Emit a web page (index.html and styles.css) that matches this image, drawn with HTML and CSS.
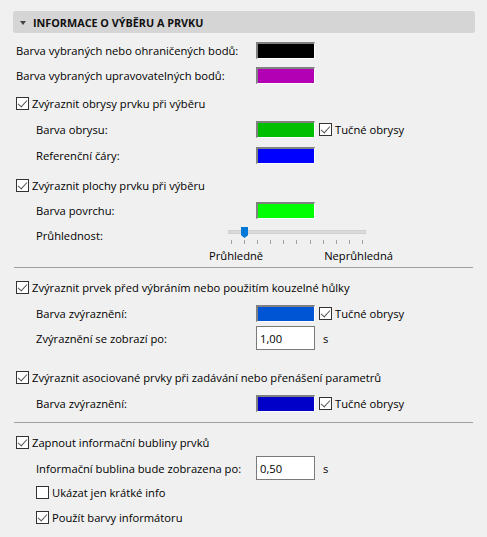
FILE: index.html
```html
<!DOCTYPE html>
<html lang="cs">
<head>
<meta charset="utf-8">
<link rel="stylesheet" href="styles.css">
</head>
<body>
<div class="panel">
  <div class="header"><span class="tri"></span><span class="title">INFORMACE O VÝBĚRU A PRVKU</span></div>

  <div class="row r1"><span class="label">Barva vybraných nebo ohraničených bodů:</span><span class="swatch black"></span></div>
  <div class="row r2"><span class="label">Barva vybraných upravovatelných bodů:</span><span class="swatch magenta"></span></div>

  <div class="row cbrow g4"><span class="cb on"></span><span>Zvýraznit obrysy prvku při výběru</span></div>
  <div class="row sub g2"><span class="label">Barva obrysu:</span><span class="swatch green"></span><span class="cb on small-gap"></span><span>Tučné obrysy</span></div>
  <div class="row sub g2"><span class="label">Referenční čáry:</span><span class="swatch blue"></span></div>

  <div class="row cbrow g6"><span class="cb on"></span><span>Zvýraznit plochy prvku při výběru</span></div>
  <div class="row sub g1"><span class="label">Barva povrchu:</span><span class="swatch lime"></span></div>
  <div class="row sub g1 sliderrow">
    <span class="label short">Průhlednost:</span>
    <div class="slider">
      <div class="track"></div>
      <div class="thumb"></div>
      <div class="ticks"><i></i><i></i><i></i><i></i><i></i><i></i><i></i><i></i><i></i><i></i><i></i></div>
    </div>
  </div>
  <div class="slabels"><span>Průhledně</span><span>Neprůhledná</span></div>

  <hr class="divider d1">

  <div class="row cbrow"><span class="cb on"></span><span>Zvýraznit prvek před výbráním nebo použitím kouzelné hůlky</span></div>
  <div class="row sub g2"><span class="label">Barva zvýraznění:</span><span class="swatch mid"></span><span class="cb on small-gap"></span><span>Tučné obrysy</span></div>
  <div class="row sub g1"><span class="label">Zvýraznění se zobrazí po:</span><span class="input">1,00</span><span class="unit">s</span></div>

  <div class="row cbrow g15"><span class="cb on"></span><span>Zvýraznit asociované prvky při zadávání nebo přenášení parametrů</span></div>
  <div class="row sub g2"><span class="label">Barva zvýraznění:</span><span class="swatch dark"></span><span class="cb on small-gap"></span><span>Tučné obrysy</span></div>

  <hr class="divider d2">

  <div class="row cbrow"><span class="cb on"></span><span>Zapnout informační bubliny prvků</span></div>
  <div class="row sub g2"><span class="label">Informační bublina bude zobrazena po:</span><span class="input">0,50</span><span class="unit">s</span></div>
  <div class="row sub"><span class="cb"></span><span>Ukázat jen krátké info</span></div>
  <div class="row sub g1"><span class="cb on"></span><span>Použít barvy informátoru</span></div>
</div>
</body>
</html>
```

FILE: styles.css
```css
* { box-sizing: border-box; }
html, body { margin: 0; padding: 0; }
body {
  background: #f0f0f0;
  font-family: "Open Sans", "Noto Sans", sans-serif;
  font-size: 11.2px;
  color: #000;
  width: 487px;
  height: 537px;
  overflow: hidden;
}
.panel {
  display: flex;
  flex-direction: column;
  padding: 11px 12px 0 16px;
}
.header {
  margin-left: -3px;
  width: 462px;
  height: 22px;
  background: #d5d5d5;
  border-radius: 3px;
  display: flex;
  align-items: center;
  padding-left: 7px;
}
.tri {
  width: 0; height: 0;
  border-left: 3px solid transparent;
  border-right: 3px solid transparent;
  border-top: 4px solid #444;
  margin-right: 7px;
  margin-top: 1px;
}
.title { font-weight: 700; font-size: 10.8px; color: #111; }
.row {
  height: 24px;
  display: flex;
  align-items: center;
  white-space: nowrap;
}
.r1 { margin-top: 5px; }
.r2 { margin-top: 1px; }
.g1 { margin-top: 1px; }
.g2 { margin-top: 2px; }
.g4 { margin-top: 4px; }
.g6 { margin-top: 6px; }
.g15 { margin-top: 15px; }
.sub { padding-left: 20px; }
.label { width: 240px; flex: none; }
.sub .label { width: 220px; }
.swatch {
  width: 59px;
  height: 17px;
  flex: none;
  border-top: 2px solid #808080;
  border-left: 2px solid #808080;
  border-right: 1px solid #fff;
  border-bottom: 1px solid #fff;
}
.black { background: #000; }
.magenta { background: #b400b4; }
.green { background: #00be00; }
.blue { background: #0000ff; }
.lime { background: #00ff00; }
.mid { background: #0055d4; }
.dark { background: #0000c8; }
.cb {
  width: 13px; height: 13px;
  flex: none;
  border: 1px solid #333;
  background: #fff;
  margin-right: 3px;
  position: relative;
}
.cb.on::after {
  content: "";
  position: absolute;
  left: 3px; top: 0px;
  width: 4px; height: 8px;
  border-right: 1.3px solid #555;
  border-bottom: 1.3px solid #555;
  transform: rotate(42deg);
}
.small-gap { margin-left: 4px; }
.input {
  width: 59px;
  height: 24px;
  flex: none;
  border: 1px solid #7a7a7a;
  background: #fff;
  padding-left: 3px;
  display: flex;
  align-items: center;
}
.unit { margin-left: 8px; }
.sliderrow .label.short { width: 192px; }
.slider {
  width: 140px;
  height: 24px;
  position: relative;
}
.track {
  position: absolute;
  left: 0; top: 7px;
  width: 138px; height: 4px;
  background: #dadada;
  border: 1px solid #d0d0d0;
}
.thumb {
  position: absolute;
  left: 13px; top: 4px;
  width: 7px; height: 11px;
  background: #0078d7;
  clip-path: polygon(0 0, 100% 0, 100% 75%, 50% 100%, 0 75%);
}
.ticks {
  position: absolute;
  left: 3px; top: 17px;
  width: 132px;
  display: flex;
  justify-content: space-between;
}
.ticks i { display: block; width: 1px; height: 4px; background: #a0a0a0; }
.slabels {
  display: flex;
  justify-content: space-between;
  width: 184px;
  margin-left: 193px;
  height: 16px;
  line-height: 16px;
  margin-top: 1px;
}
.divider {
  border: 0;
  height: 1px;
  background: #a0a0a0;
  margin: 0;
  width: 459px;
  margin-left: -2px;
}
.d1 { margin-top: 3px; margin-bottom: 7px; }
.d2 { margin-top: 7px; margin-bottom: 7px; }
```
